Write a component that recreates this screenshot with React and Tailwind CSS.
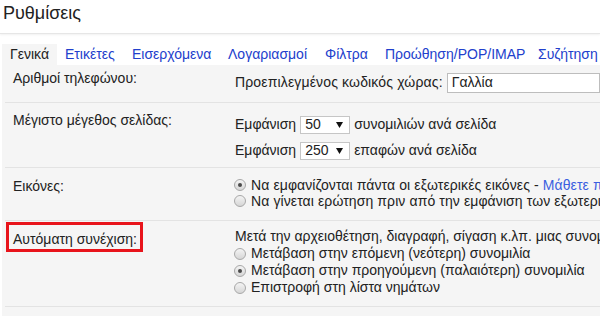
import React from 'react'

const font = { fontFamily: '"Liberation Sans", Arial, sans-serif' }

const tabs = [
  { label: 'Γενικά', w: 'w-[55px]' },
  { label: 'Ετικέτες', w: 'w-[67px]' },
  { label: 'Εισερχόμενα', w: 'w-[96px]' },
  { label: 'Λογαριασμοί', w: 'w-[97px]' },
  { label: 'Φίλτρα', w: 'w-[60px]' },
  { label: 'Προώθηση/POP/IMAP', w: 'w-[153px]' },
  { label: 'Συζήτηση', w: 'w-[80px]' },
]

function Radio({ checked }) {
  return (
    <span className="relative inline-flex h-[12px] w-[12px] shrink-0 items-center justify-center rounded-full border border-[#a8a8a8] bg-gradient-to-b from-[#f4f4f4] to-[#d6d6d6]">
      {checked && <span className="h-[4px] w-[4px] rounded-full bg-[#4a4a4a]" />}
    </span>
  )
}

function Select({ value }) {
  return (
    <span className="flex h-[18px] w-[50px] items-center justify-between border border-[#c6c6c6] bg-white pl-[4px] pr-[6px]">
      <span>{value}</span>
      <svg width="7" height="6" viewBox="0 0 7 6"><path d="M0 0h7L3.5 6z" fill="#111" /></svg>
    </span>
  )
}

function Row({ label, children, className = '' }) {
  return (
    <div className={`grid grid-cols-[222px_1fr] border-b border-[#e3e3e3] pl-[8px] ${className}`}>
      {label}
      <div className="min-w-0">{children}</div>
    </div>
  )
}

export default function App() {
  return (
    <div className="h-[316px] w-[600px] overflow-hidden whitespace-nowrap bg-white text-[14px] text-[#222]" style={font}>
      <div className="h-[34px] border-b border-[#e6e6e6] pl-[3px] pt-[3px] text-[18px] leading-[21px] text-[#222] shadow-[0_1px_2px_rgba(0,0,0,0.06)]">
        Ρυθμίσεις
      </div>
      <div className="flex pl-[2px] pt-[10px]">
        {tabs.map((t, i) => (
          <span
            key={t.label}
            className={`h-[21px] shrink-0 pl-[8px] leading-[21px] ${t.w} ${i === 0 ? 'bg-[#f5f5f5] text-[#222]' : 'text-[#2240cc]'}`}
          >
            {t.label}
          </span>
        ))}
      </div>
      <div className="ml-[2px] h-[260px] bg-[#f5f5f5]">
        <div className="ml-[3px]">
          <Row
            className="h-[38px]"
            label={<div className="pt-[5px] leading-[16px]">Αριθμοί τηλεφώνου:</div>}
          >
            <div className="flex items-center gap-[4px] pt-[7px]">
              <span className="tracking-[0.15px]">Προεπιλεγμένος κωδικός χώρας:</span>
              <span className="flex h-[20px] w-[200px] items-center border border-[#bdbdbd] bg-white pl-[4px]">Γαλλία</span>
            </div>
          </Row>
          <Row
            className="h-[65px]"
            label={<div className="pt-[9px] leading-[16px]">Μέγιστο μέγεθος σελίδας:</div>}
          >
            <div className="flex flex-col gap-[5px] pt-[11px]">
              <div className="flex items-center gap-[4px]">
                <span>Εμφάνιση</span>
                <Select value="50" />
                <span>συνομιλιών ανά σελίδα</span>
              </div>
              <div className="flex items-center gap-[4px]">
                <span>Εμφάνιση</span>
                <Select value="250" />
                <span>επαφών ανά σελίδα</span>
              </div>
            </div>
          </Row>
          <Row
            className="h-[53px]"
            label={<div className="pt-[10px] leading-[16px]">Εικόνες:</div>}
          >
            <div className="-ml-px flex flex-col pt-[9px] leading-[16px]">
              <div className="flex items-center gap-[5px]">
                <Radio checked />
                <span className="tracking-[0.1px]">
                  Να εμφανίζονται πάντα οι εξωτερικές εικόνες - <span className="text-[#3b5fe0]">Μάθετε περισσότερα</span>
                </span>
              </div>
              <div className="flex items-center gap-[5px]">
                <Radio />
                <span className="tracking-[0.1px]">Να γίνεται ερώτηση πριν από την εμφάνιση των εξωτερικών εικόνων</span>
              </div>
            </div>
          </Row>
          <Row
            className="h-[86px]"
            label={
              <div className="pt-[1px]">
                <span className="-ml-[7px] inline-block border-[3px] border-[#e8141b] pb-[2px] pl-[4px] pr-[3px] pt-[6px] leading-[16px]">
                  Αυτόματη συνέχιση:
                </span>
              </div>
            }
          >
            <div className="flex flex-col pt-[7px] leading-[17px]">
              <span>Μετά την αρχειοθέτηση, διαγραφή, σίγαση κ.λπ. μιας συνομιλίας:</span>
              <div className="-ml-px flex items-center gap-[5px]">
                <Radio />
                <span>Μετάβαση στην επόμενη (νεότερη) συνομιλία</span>
              </div>
              <div className="-ml-px flex items-center gap-[5px]">
                <Radio checked />
                <span>Μετάβαση στην προηγούμενη (παλαιότερη) συνομιλία</span>
              </div>
              <div className="-ml-px flex items-center gap-[5px]">
                <Radio />
                <span>Επιστροφή στη λίστα νημάτων</span>
              </div>
            </div>
          </Row>
        </div>
      </div>
    </div>
  )
}
